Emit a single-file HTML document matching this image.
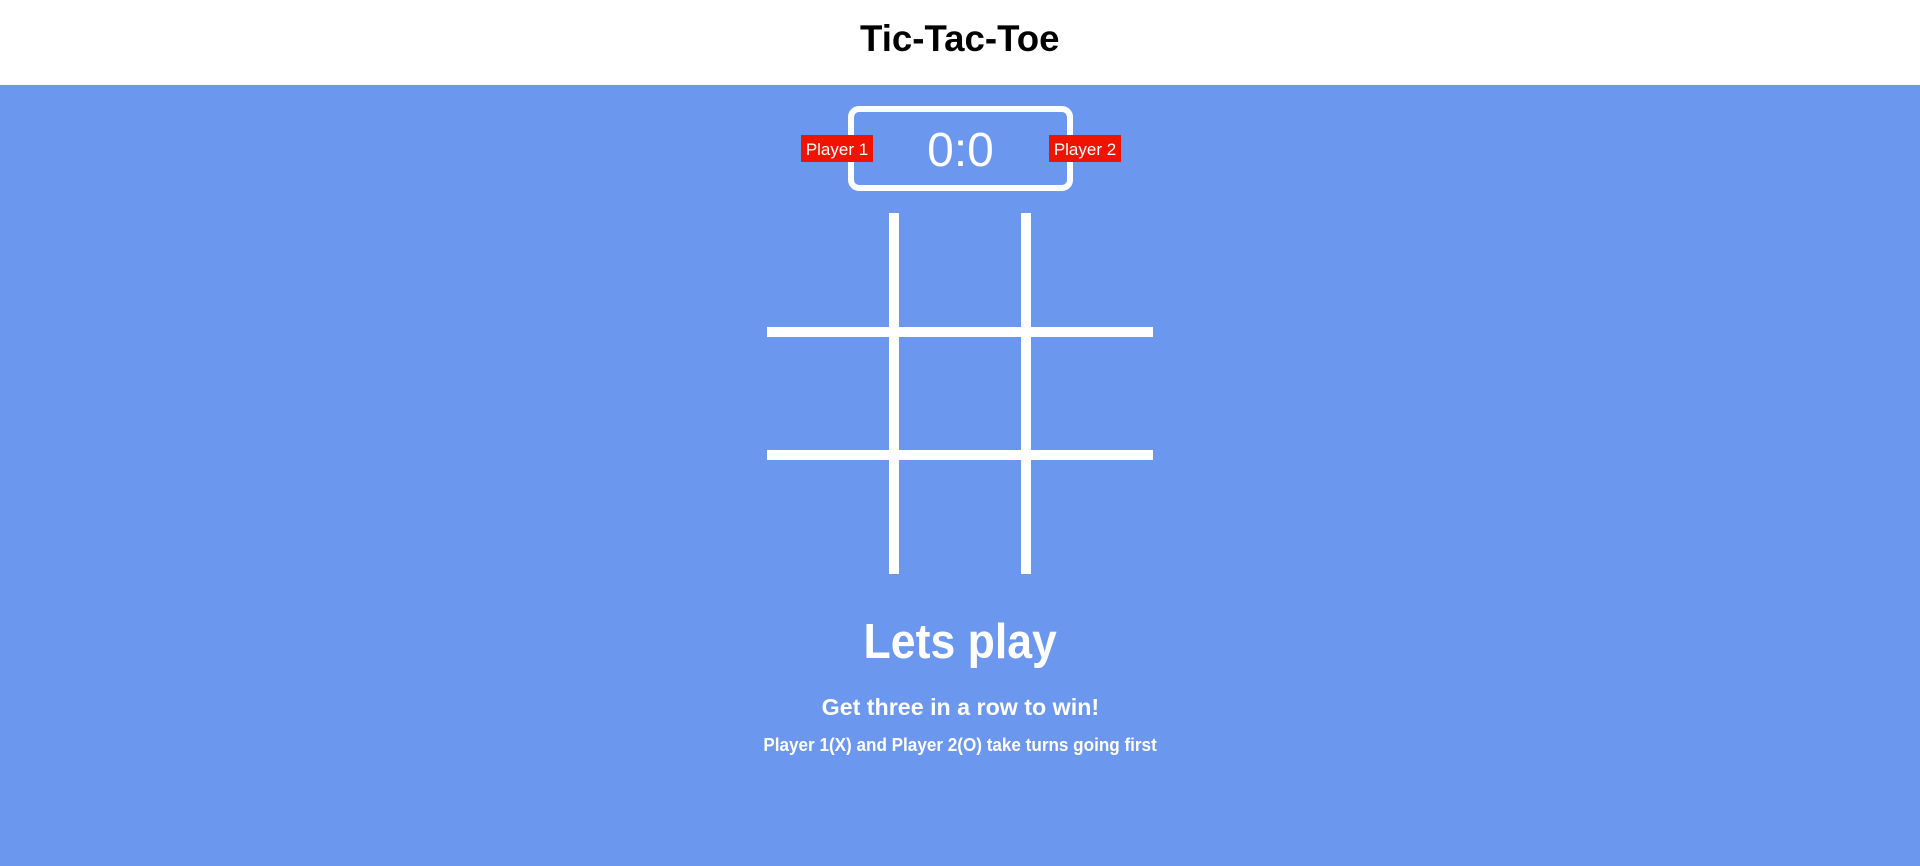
<!DOCTYPE html>
<html><head><style>
*{margin:0;padding:0;box-sizing:border-box}
body{width:1920px;height:866px;background:#6b97ee;font-family:"Liberation Sans",sans-serif;position:relative;overflow:hidden}
.hdr{position:absolute;left:0;top:0;width:1920px;height:85px;background:#fff;text-align:center}
.hdr h1{font-size:37px;font-weight:bold;color:#000;line-height:78px;display:inline-block;transform:scaleX(0.99)}
.box{position:absolute;left:848px;top:106px;width:225px;height:85px;border:6px solid #fff;border-radius:11px}
.score{position:absolute;left:848px;top:108px;width:225px;height:85px;text-align:center;line-height:85px;color:#fff;font-size:48px;font-weight:300}
.lab{position:absolute;top:135px;height:27px;width:72px;background:#f01400;color:#fff;font-size:17px;line-height:29px;text-align:center}
.v,.h{position:absolute;background:#fff}
.t{position:absolute;left:0;width:1920px;text-align:center;color:#fff;font-weight:bold}
.t span{display:inline-block}
</style></head><body>
<div class="hdr"><h1>Tic-Tac-Toe</h1></div>
<div class="box"></div>
<div class="score">0:0</div>
<div class="lab" style="left:801px">Player 1</div>
<div class="lab" style="left:1049px">Player 2</div>
<div class="v" style="left:889px;top:213px;width:10px;height:361px"></div>
<div class="v" style="left:1021px;top:213px;width:10px;height:361px"></div>
<div class="h" style="left:767px;top:327px;width:386px;height:10px"></div>
<div class="h" style="left:767px;top:450px;width:386px;height:10px"></div>
<div class="t" style="top:612px;font-size:49px;line-height:60px"><span style="transform:scaleX(0.91)">Lets play</span></div>
<div class="t" style="top:692px;font-size:23px;line-height:30px"><span style="transform:scaleX(1.01)">Get three in a row to win!</span></div>
<div class="t" style="top:733px;font-size:18px;line-height:24px"><span style="transform:scaleX(0.95)">Player 1(X) and Player 2(O) take turns going first</span></div>
</body></html>
